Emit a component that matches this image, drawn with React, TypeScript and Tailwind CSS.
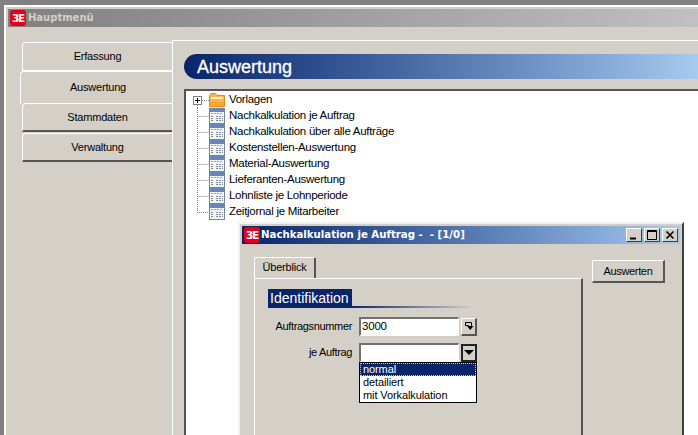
import type { ReactNode } from "react";

const reports = [
  "Nachkalkulation je Auftrag",
  "Nachkalkulation über alle Aufträge",
  "Kostenstellen-Auswertung",
  "Material-Auswertung",
  "Lieferanten-Auswertung",
  "Lohnliste je Lohnperiode",
  "Zeitjornal je Mitarbeiter",
];

function Logo() {
  return (
    <div className="flex h-4 w-4 shrink-0 items-center justify-center overflow-hidden rounded-[3px] bg-[#e2001a] font-['DejaVu_Sans'] text-[10.5px] font-bold tracking-[-1.2px] text-white">
      3E
    </div>
  );
}

function Connector({ last, box }: { last?: boolean; box?: boolean }) {
  return (
    <svg width="16" height="16" viewBox="0 0 16 16" className="shrink-0">
      <path
        d={box ? "M9 8.5H16M4.5 13V16" : last ? "M4.5 0V8.5H16" : "M4.5 0V16M4.5 8.5H16"}
        stroke="#808080"
        strokeDasharray="1 1"
        fill="none"
      />
      {box && (
        <>
          <rect x="0.5" y="4.5" width="8" height="8" fill="#fff" stroke="#808080" />
          <path d="M2 8.5H7M4.5 6V11" stroke="#000" fill="none" />
        </>
      )}
    </svg>
  );
}

function FolderIcon() {
  return (
    <svg width="16" height="16" viewBox="0 0 16 16" className="shrink-0">
      <path d="M0.5 3.5V14.5H15.5V3.5H8L6.5 1.5H2L0.5 3.5Z" fill="#f9b64c" stroke="#e98a12" />
      <rect x="2" y="5" width="12" height="2" fill="#fff0c4" />
      <rect x="1" y="10" width="14" height="4" fill="#f6a631" />
    </svg>
  );
}

function TableIcon() {
  return (
    <svg width="16" height="16" viewBox="0 0 16 16" className="shrink-0">
      <rect x="0.5" y="0.5" width="15" height="15" fill="#f6f5ee" stroke="#76849c" />
      <rect x="1" y="1" width="14" height="3" fill="#5b88d6" />
      <path d="M2 5.5H14" stroke="#8fb070" strokeDasharray="2 1" />
      <path d="M2 8.5H5M2 10.5H5M2 12.5H5M7 8.5H14M7 10.5H14M7 12.5H14" stroke="#7c8aa5" strokeDasharray="2 1" />
    </svg>
  );
}

function SideTab({ label, active, top }: { label: string; active?: boolean; top?: boolean }) {
  if (active) {
    return (
      <div className="-mb-px ml-[-2px] flex h-[33px] items-center justify-center rounded-tl-[4px] border-t border-l border-white pb-[1px] pl-[3px]">
        {label}
      </div>
    );
  }
  return (
    <div
      className={`flex h-[29px] items-center justify-center rounded-tl-[4px] border-l border-white ${
        top ? "border-t border-b" : "mb-[1px] border-t border-b-2 border-t-white border-b-[#555555] pt-[1px]"
      }`}
    >
      {label}
    </div>
  );
}

function Sunken({ children }: { children?: ReactNode }) {
  return (
    <div className="flex h-[19px] w-[100px] items-center border-t-2 border-r border-b border-l-2 border-t-[#707070] border-r-white border-b-white border-l-[#707070] bg-white pl-px text-[11.5px] leading-none tracking-[-0.2px]">
      {children}
    </div>
  );
}

function FieldRow({ label, children }: { label: string; children: ReactNode }) {
  return (
    <div className="flex h-[19px] items-center">
      <div className="w-[85px] pr-px text-right">{label}</div>
      <div className="ml-[6px] flex items-center gap-[2px]">{children}</div>
    </div>
  );
}

export default function App() {
  return (
    <div className="relative h-[435px] w-[698px] overflow-hidden bg-[#808080] pt-[5px] pl-[4px] font-['Liberation_Sans',sans-serif] text-[11.5px] leading-none tracking-[-0.28px] text-black">
      {/* Hauptfenster */}
      <div className="flex h-[430px] flex-col border-t-2 border-l-2 border-white bg-[#d4d0c8] pt-[2px] pl-[2px]">
        <div className="flex h-[18px] shrink-0 items-center gap-[2px] bg-gradient-to-r from-[#808080] to-[#c0c0c0] pl-[2px] font-['DejaVu_Sans'] text-[10px] font-bold tracking-normal text-[#d4d0c8]">
          <Logo />
          Hauptmenü
        </div>

        <div className="flex min-h-0 flex-1 pt-[13px]">
          <div className="ml-[14px] w-[150px] shrink-0 pt-[2px] text-[11px] tracking-[-0.2px]">
            <SideTab label="Erfassung" top />
            <SideTab label="Auswertung" active />
            <SideTab label="Stammdaten" />
            <SideTab label="Verwaltung" />
          </div>

          <div className="flex min-w-0 flex-1 flex-col border-t border-l border-white pt-[13px] pl-[11px]">
            <div className="flex h-[25px] shrink-0 items-center rounded-l-full bg-gradient-to-r from-[#0a246a] to-[#a6caf0] pl-[13px] text-[18px] tracking-normal text-white [-webkit-text-stroke:0.3px_white]">
              Auswertung
            </div>
            <div className="mt-[10px] flex-1 border-t-2 border-l-2 border-t-[#555555] border-l-[#555555] bg-white pt-px pl-[1px]">
              <div className="flex h-4 items-center">
                <span className="ml-[6px]"><Connector box /></span>
                <FolderIcon />
                <span className="ml-[4px]">Vorlagen</span>
              </div>
              {reports.map((report, i) => (
                <div key={report} className="flex h-4 items-center">
                  <span className="ml-[6px]"><Connector last={i === reports.length - 1} /></span>
                  <TableIcon />
                  <span className="ml-[4px]">{report}</span>
                </div>
              ))}
            </div>
          </div>
        </div>
      </div>

      {/* Dialog */}
      <div className="absolute top-[222px] left-[238px] flex h-[230px] w-[446px] flex-col border-t-2 border-r-2 border-l-2 border-t-[#f4f2ee] border-r-[#404040] border-l-[#f4f2ee] bg-[#d4d0c8] pt-[2px] pr-[2px] pl-[2px] text-[11px] tracking-[-0.35px]">
        <div className="flex h-[18px] shrink-0 items-center bg-gradient-to-r from-[#0a246a] to-[#a6caf0] pr-[2px] pl-[2px] font-['DejaVu_Sans'] text-[10.2px] font-bold tracking-normal whitespace-pre text-white">
          <Logo />
          <span className="ml-[1px] flex-1">Nachkalkulation je Auftrag -  - [1/0]</span>
          <div className="flex gap-[2px]">
            <CaptionButton kind="min" />
            <CaptionButton kind="max" />
            <CaptionButton kind="close" />
          </div>
        </div>

        <div className="flex flex-1 pt-[13px] pl-[12px]">
          <div className="flex w-[329px] shrink-0 flex-col">
            <div className="flex h-[21px] w-[62px] items-center justify-center rounded-t-[2px] border-t border-r-2 border-l border-t-white border-r-[#555555] border-l-white pb-[2px] tracking-[-0.2px]">
              Überblick
            </div>
            <div className="flex-1 border-t border-r-2 border-l border-t-white border-r-[#555555] border-l-white pt-[10px] pl-[13px]">
              <div className="h-[19px] w-[207px] bg-[linear-gradient(to_right,#0a246a,#0a246a_40%,#d4d0c8)] bg-[length:100%_2px] bg-bottom bg-no-repeat">
                <div className="flex h-[18px] w-[84px] items-center bg-[#0a246a] pl-[2px] text-[14px] tracking-normal text-white">
                  Identifikation
                </div>
              </div>
              <div className="mt-[9px] flex flex-col gap-[7px]">
                <FieldRow label="Auftragsnummer">
                  <Sunken>3000</Sunken>
                  <LookupButton />
                </FieldRow>
                <FieldRow label="je Auftrag">
                  <Sunken />
                  <ArrowButton />
                </FieldRow>
              </div>
              <div className="ml-[91px] w-[118px] border border-black bg-white tracking-[-0.1px]">
                <div className="flex h-[13px] items-center border border-dotted border-[#d4d0c8] bg-[#0a246a] pl-[2px] text-white">
                  normal
                </div>
                <div className="flex h-[13px] items-center pl-[3px]">detailiert</div>
                <div className="flex h-[13px] items-center pl-[3px]">mit Vorkalkulation</div>
              </div>
            </div>
          </div>
          <div className="mt-[3px] ml-[9px] flex h-[23px] w-[73px] items-center justify-center border border-r-2 border-b-2 border-white border-r-[#555555] border-b-[#555555]">
            Auswerten
          </div>
        </div>
      </div>
    </div>
  );
}

function CaptionButton({ kind }: { kind: "min" | "max" | "close" }) {
  return (
    <div className="h-[14px] w-[16px] border border-t-white border-r-[#404040] border-b-[#404040] border-l-white bg-[#d4d0c8]">
      <svg width="14" height="12" viewBox="0 0 14 12">
        {kind === "min" && <path d="M3 9.5H9" stroke="#000" strokeWidth="2" />}
        {kind === "max" && <path d="M2.5 2V1.5H11.5V10.5H2.5V2M2 2.5H12" stroke="#000" fill="none" />}
        {kind === "close" && <path d="M3.5 2.5L10.5 9.5M10.5 2.5L3.5 9.5" stroke="#000" strokeWidth="1.6" fill="none" />}
      </svg>
    </div>
  );
}

function LookupButton() {
  return (
    <div className="flex h-[18px] w-[16px] items-center justify-center border-t border-r-2 border-b-2 border-l border-t-white border-r-[#555555] border-b-[#555555] border-l-white">
      <svg width="10" height="11" viewBox="0 0 10 11">
        <path d="M1.5 1.5H7.5V5M1.5 1.5V4.5H4.5V5" stroke="#000" fill="none" />
        <path d="M3 5H9.5L6.2 9Z" fill="#000" />
      </svg>
    </div>
  );
}

function ArrowButton() {
  return (
    <div className="flex h-[18px] w-[16px] items-center justify-center border-2 border-[#222222] bg-[#d4d0c8]">
      <svg width="10" height="5" viewBox="0 0 10 5">
        <path d="M0 0H10L5 5Z" fill="#000" />
      </svg>
    </div>
  );
}
